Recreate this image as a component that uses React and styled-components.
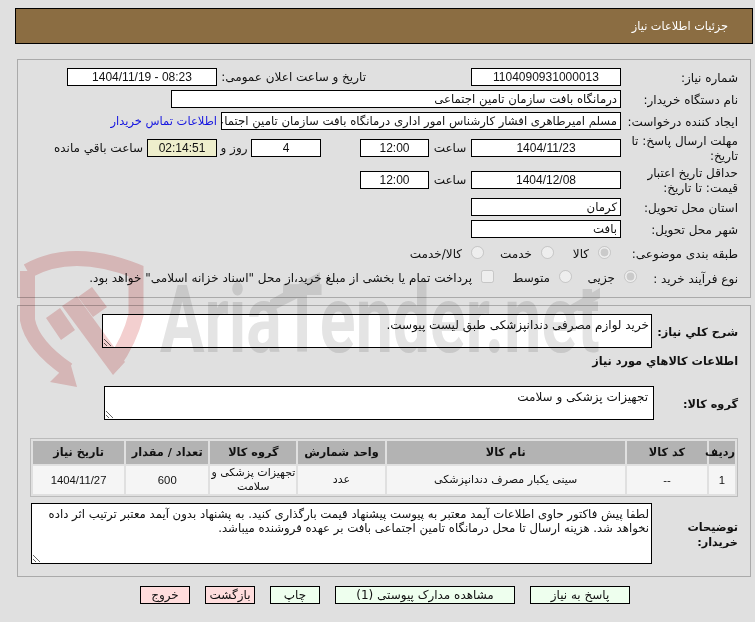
import React from "react";
import styled, { createGlobalStyle } from "styled-components";

const Global = createGlobalStyle`
  html, body { margin: 0; padding: 0; background: #e0e0e0; }
  body { font-family: Tahoma, "DejaVu Sans", "Liberation Sans", sans-serif; font-size: 12px; color: #111; }
`;

const Page = styled.div`
  position: relative;
  width: 755px;
  height: 622px;
  overflow: hidden;
  direction: rtl;
  padding-top: 8px;
  box-sizing: border-box;
`;
const Header = styled.div`
  height: 36px;
  margin: 0 2px 0 0;
  width: 738px;
  box-sizing: border-box;
  border: 1px solid #000;
  background: #8b6d42;
  color: #fff;
  display: flex;
  align-items: center;
  padding-right: 24px;
  font-size: 11.3px;
`;
const Panel = styled.section`
  width: 734px;
  box-sizing: border-box;
  margin: ${p => p.$top}px 4px 0 0;
  border: 1px solid #aaa;
  padding: ${p => p.$pad};
`;
const Row = styled.div`
  display: flex;
  align-items: center;
  height: ${p => p.$h}px;
  margin-top: ${p => p.$mt || 0}px;
`;
const Label = styled.div`
  width: ${p => p.$w || 117}px;
  flex: none;
  line-height: 15px;
  padding-top: 2px;
  font-weight: ${p => (p.$bold ? 700 : 400)};
  font-size: ${p => (p.$bold ? 11.3 : 12)}px;
`;
const Box = styled.div`
  width: ${p => p.$w}px;
  height: 18px;
  flex: none;
  box-sizing: border-box;
  border: 1px solid #000;
  background: ${p => p.$bg || "#fff"};
  text-align: ${p => (p.$start ? "right" : "center")};
  padding: 0 3px;
  line-height: 16px;
  white-space: nowrap;
  overflow: hidden;
  font-size: ${p => (p.$num ? 12 : 11.7)}px;
  font-family: ${p => (p.$num ? '"Liberation Sans", sans-serif' : "inherit")};
`;
const Note = styled.span`
  flex: none;
  box-sizing: border-box;
  width: ${p => p.$w}px;
  padding-right: ${p => p.$pad || 0}px;
  text-align: ${p => p.$align || "center"};
  white-space: nowrap;
  font-size: 12px;
`;
const Link = styled.a`
  color: #1515e0;
  margin-right: 4px;
  font-size: 11.5px;
  white-space: nowrap;
`;
const Option = styled.label`
  flex: none;
  box-sizing: border-box;
  width: ${p => p.$w}px;
  padding-right: ${p => p.$inset || 0}px;
  display: flex;
  align-items: center;
  font-size: 12px;
  white-space: nowrap;
`;
const Radio = styled.input`
  margin: 0 0 3px 9px;
  width: 13px;
  height: 13px;
  flex: none;
`;
const Area = styled.textarea`
  display: block;
  box-sizing: border-box;
  width: ${p => p.$w}px;
  height: ${p => p.$h}px;
  border: 1px solid #000;
  border-radius: 0;
  background: #fff;
  padding: 3px ${p => p.$pr || 2}px 2px 2px;
  margin: 0;
  font: ${p => p.$fs || 12}px/14px Tahoma, "DejaVu Sans", sans-serif;
  color: #111;
  outline: none;
  overflow: hidden;
`;
const Heading = styled.div`
  font-weight: 700;
  font-size: 11.3px;
  line-height: 16px;
  margin-top: 6px;
`;
const Table = styled.table`
  border: 1px solid #bbb;
  border-spacing: 2px;
  table-layout: fixed;
  width: 708px;
  margin: 18px 0 0 -1px;
`;
const Th = styled.th`
  background: #b3b3b3;
  height: 23px;
  padding: 0;
  font-size: 11.3px;
  font-weight: 700;
`;
const Td = styled.td`
  background: #f5f5f5;
  height: 28px;
  padding: 0;
  text-align: center;
  font-size: ${p => (p.$num ? 11.3 : 11)}px;
  line-height: 14px;
  font-family: ${p => (p.$num ? '"Liberation Sans", sans-serif' : "inherit")};
`;
const Actions = styled.div`
  display: flex;
  gap: 15px;
  margin: 9px 125px 0 0;
`;
const Button = styled.button`
  width: ${p => p.$w}px;
  height: 18px;
  box-sizing: border-box;
  border: 1px solid #000;
  border-radius: 0;
  padding: 0;
  background: ${p => (p.$tone === "red" ? "#ffdddd" : "#eeffee")};
  font: 12px Tahoma, "DejaVu Sans", sans-serif;
  color: #111;
`;
const Watermark = styled.svg`
  position: absolute;
  left: 0;
  top: 0;
  pointer-events: none;
  mix-blend-mode: multiply;
`;

const cols = [26, 80, 238, 86, 86, 82, 91];
const heads = ["ردیف", "کد کالا", "نام کالا", "واحد شمارش", "گروه کالا", "تعداد / مقدار", "تاریخ نیاز"];

export default function App() {
  return (
    <Page>
      <Global />
      <Header>جزئیات اطلاعات نیاز</Header>
      <Panel $top={15} $pad="6px 12px 8px 0">
        <Row $h={22}>
          <Label>شماره نیاز:</Label>
          <Box $w={150} $num>1104090931000013</Box>
          <Note $w={105} />
          <Note $w={149} $align="right">تاریخ و ساعت اعلان عمومی:</Note>
          <Box $w={150} $num>08:23 - 1404/11/19</Box>
        </Row>
        <Row $h={22}>
          <Label>نام دستگاه خریدار:</Label>
          <Box $w={450} $start>درمانگاه بافت سازمان تامین اجتماعی</Box>
        </Row>
        <Row $h={22}>
          <Label>ایجاد کننده درخواست:</Label>
          <Box $w={400} $start>مسلم امیرطاهری افشار کارشناس امور اداری درمانگاه بافت سازمان تامین اجتماعی</Box>
          <Link>اطلاعات تماس خریدار</Link>
        </Row>
        <Row $h={32}>
          <Label>مهلت ارسال پاسخ: تا تاریخ:</Label>
          <Box $w={150} $num>1404/11/23</Box>
          <Note $w={42}>ساعت</Note>
          <Box $w={69} $num>12:00</Box>
          <Note $w={39} />
          <Box $w={70} $num>4</Box>
          <Note $w={34}>روز و</Note>
          <Box $w={70} $num $bg="#eeeecc">02:14:51</Box>
          <Note $w={94} $align="right" $pad={4}>ساعت باقي مانده</Note>
        </Row>
        <Row $h={32}>
          <Label>حداقل تاریخ اعتبار قیمت: تا تاریخ:</Label>
          <Box $w={150} $num>1404/12/08</Box>
          <Note $w={42}>ساعت</Note>
          <Box $w={69} $num>12:00</Box>
        </Row>
        <Row $h={22}>
          <Label>استان محل تحویل:</Label>
          <Box $w={150} $start>کرمان</Box>
        </Row>
        <Row $h={22}>
          <Label>شهر محل تحویل:</Label>
          <Box $w={150} $start>بافت</Box>
        </Row>
        <Row $h={27}>
          <Label>طبقه بندی موضوعی:</Label>
          <Option $w={67} $inset={10}><Radio type="radio" disabled defaultChecked name="a" />کالا</Option>
          <Option $w={70}><Radio type="radio" disabled name="a" />خدمت</Option>
          <Option $w={110}><Radio type="radio" disabled name="a" />کالا/خدمت</Option>
        </Row>
        <Row $h={22}>
          <Label $w={101}>نوع فرآیند خرید :</Label>
          <Option $w={65}><Radio type="radio" disabled defaultChecked name="b" />جزیی</Option>
          <Option $w={78}><Radio type="radio" disabled name="b" />متوسط</Option>
          <Option $w={410}><Radio type="checkbox" disabled />پرداخت تمام یا بخشی از مبلغ خرید،از محل "اسناد خزانه اسلامی" خواهد بود.</Option>
        </Row>
      </Panel>
      <Panel $top={7} $pad="8px 12px 12px 0">
        <Row $h={34}>
          <Label $w={86} $bold>شرح کلي نياز:</Label>
          <Area $w={550} $h={34} readOnly defaultValue="خرید لوازم مصرفی دندانپزشکی طبق لیست پیوست." />
        </Row>
        <Heading>اطلاعات کالاهاي مورد نياز</Heading>
        <Row $h={34} $mt={16}>
          <Label $w={84} $bold>گروه کالا:</Label>
          <Area $w={550} $h={34} $pr={5} readOnly defaultValue="تجهیزات پزشکی و سلامت" />
        </Row>
        <Table>
          <colgroup>
            {cols.map((w, i) => <col key={i} width={w} />)}
          </colgroup>
          <thead>
            <tr>{heads.map(h => <Th key={h}>{h}</Th>)}</tr>
          </thead>
          <tbody>
            <tr>
              <Td $num>1</Td>
              <Td $num>--</Td>
              <Td>سینی یکبار مصرف دندانپزشکی</Td>
              <Td>عدد</Td>
              <Td>تجهیزات پزشکی و سلامت</Td>
              <Td $num>600</Td>
              <Td $num>1404/11/27</Td>
            </tr>
          </tbody>
        </Table>
        <Row $h={61} $mt={6}>
          <Label $w={86} $bold>توضیحات خریدار:</Label>
          <Area $w={621} $h={61} $fs={11.7} readOnly defaultValue="لطفا پیش فاکتور حاوی اطلاعات آیمد معتبر به پیوست پیشنهاد قیمت بارگذاری کنید. به پشنهاد بدون آیمد معتبر ترتیب اثر داده نخواهد شد. هزینه ارسال تا محل درمانگاه تامین اجتماعی بافت بر عهده فروشنده میباشد." />
        </Row>
      </Panel>
      <Actions>
        <Button $w={100}>پاسخ به نیاز</Button>
        <Button $w={180}>مشاهده مدارک پیوستی (1)</Button>
        <Button $w={50}>چاپ</Button>
        <Button $w={50} $tone="red">بازگشت</Button>
        <Button $w={50} $tone="red">خروج</Button>
      </Actions>
      <Watermark width="755" height="622" viewBox="0 0 755 622" aria-hidden="true">
        <g fill="none" stroke="#f3cfcf" strokeWidth="15">
          <path d="M27.500 271 Q72 246 136 271 L136 315 Q130 340 113 364" />
          <path d="M27.500 271 L27.500 320 Q32 345 68 370" />
        </g>
        <g fill="#f3cfcf">
          <polygon points="70,362 50,382 77,387" />
          <polygon points="78,297 92,287 107,307 93,317" />
          <polygon points="46,318 60,308 75,330 61,340" />
          <polygon points="62,306 77,296 125,362 113,375" />
        </g>
        <g fill="#e4e4e4">
          <text transform="translate(160 352) scale(0.705 1)" direction="ltr" fontFamily="Roboto, sans-serif" fontWeight="700" fontSize="94">AriaTender.net</text>
          <polygon points="270,300 320,272 320,287 270,312" />
          <polygon points="567,307 600,288 600,298 567,316" />
        </g>
      </Watermark>
    </Page>
  );
}
